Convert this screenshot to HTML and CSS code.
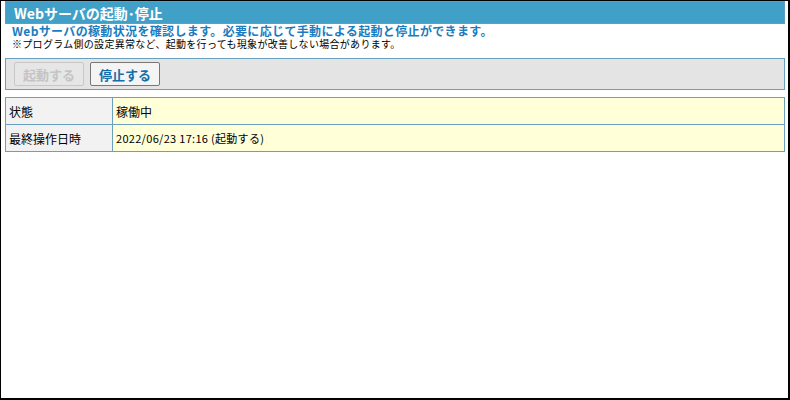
FILE: index.html
```html
<!DOCTYPE html>
<html>
<head>
    <title>
        Webサーバの起動・停止
    </title>
    <link rel="stylesheet" href="styles.css">
</head>
<body>
    <div class="frame">
        <div class="title-bar">
            <h1>Webサーバの起動･停止</h1>
        </div>
        <p class="lead">Webサーバの稼動状況を確認します。必要に応じて手動による起動と停止ができます。</p>
        <p class="note">※プログラム側の設定異常など、起動を行っても現象が改善しない場合があります。</p>

        <div class="toolbar">
            <button class="btn" disabled>起動する</button>
            <button class="btn">停止する</button>
        </div>

        <table class="status-table">
            <tr>
                <th>状態</th>
                <td>稼働中</td>
            </tr>
            <tr>
                <th>最終操作日時</th>
                <td class="small">2022/06/23 17:16 (起動する)</td>
            </tr>
        </table>
    </div>
</body>
</html>
```

FILE: styles.css
```css
html, body {
    margin: 0;
    padding: 0;
    height: 100%;
}

body {
    font-family: "Noto Sans CJK JP", "Liberation Sans", sans-serif;
    background-color: white;
}

.frame {
    box-sizing: border-box;
    height: 400px;
    width: 790px;
    border-left: 1px solid black;
    border-top: 1px solid black;
    border-right: 2px solid black;
    border-bottom: 2px solid black;
    padding: 0 3px 0 4px;
}

.title-bar {
    height: 21px;
    background-color: rgb(64, 160, 200);
    border: 1px solid rgb(96, 160, 190);
    display: flex;
    align-items: center;
    padding-left: 8px;
}

.title-bar h1 {
    margin: 0;
    font-size: 14px;
    font-weight: bold;
    color: white;
    line-height: 1;
}

.lead {
    margin: 0 0 0 7px;
    font-size: 12px;
    font-weight: bold;
    color: rgb(26, 124, 190);
    line-height: 14px;
    letter-spacing: 0.35px;
}

.note {
    margin: 0 0 0 7px;
    font-size: 10px;
    color: black;
    line-height: 12px;
    letter-spacing: 0.3px;
}

.toolbar {
    margin-top: 8px;
    height: 30px;
    background-color: rgb(228, 228, 228);
    border: 1px solid rgb(104, 160, 190);
    display: flex;
    align-items: center;
    gap: 6px;
    padding-left: 8px;
}

.btn {
    height: 24px;
    width: 70px;
    font-family: inherit;
    font-size: 13px;
    font-weight: bold;
    color: rgb(20, 110, 170);
    background-color: rgb(244, 244, 244);
    border: 1px solid rgb(120, 120, 120);
    border-radius: 2px;
    padding: 0;
    cursor: pointer;
}

.btn:disabled {
    color: rgb(196, 196, 196);
    border-color: rgb(200, 200, 200);
    background-color: rgb(230, 230, 230);
    cursor: default;
}

.status-table {
    margin-top: 7px;
    width: 100%;
    border-collapse: collapse;
    font-size: 12px;
}

.status-table th,
.status-table td {
    border: 1px solid rgb(104, 160, 190);
    height: 27px;
    padding: 0 0 0 3px;
    text-align: left;
    font-weight: normal;
    box-sizing: border-box;
}

.status-table th {
    width: 107px;
    background-color: rgb(242, 242, 242);
}

.status-table td {
    background-color: rgb(255, 255, 216);
}

.status-table td.small {
    font-size: 11px;
    letter-spacing: 0.3px;
}
```
